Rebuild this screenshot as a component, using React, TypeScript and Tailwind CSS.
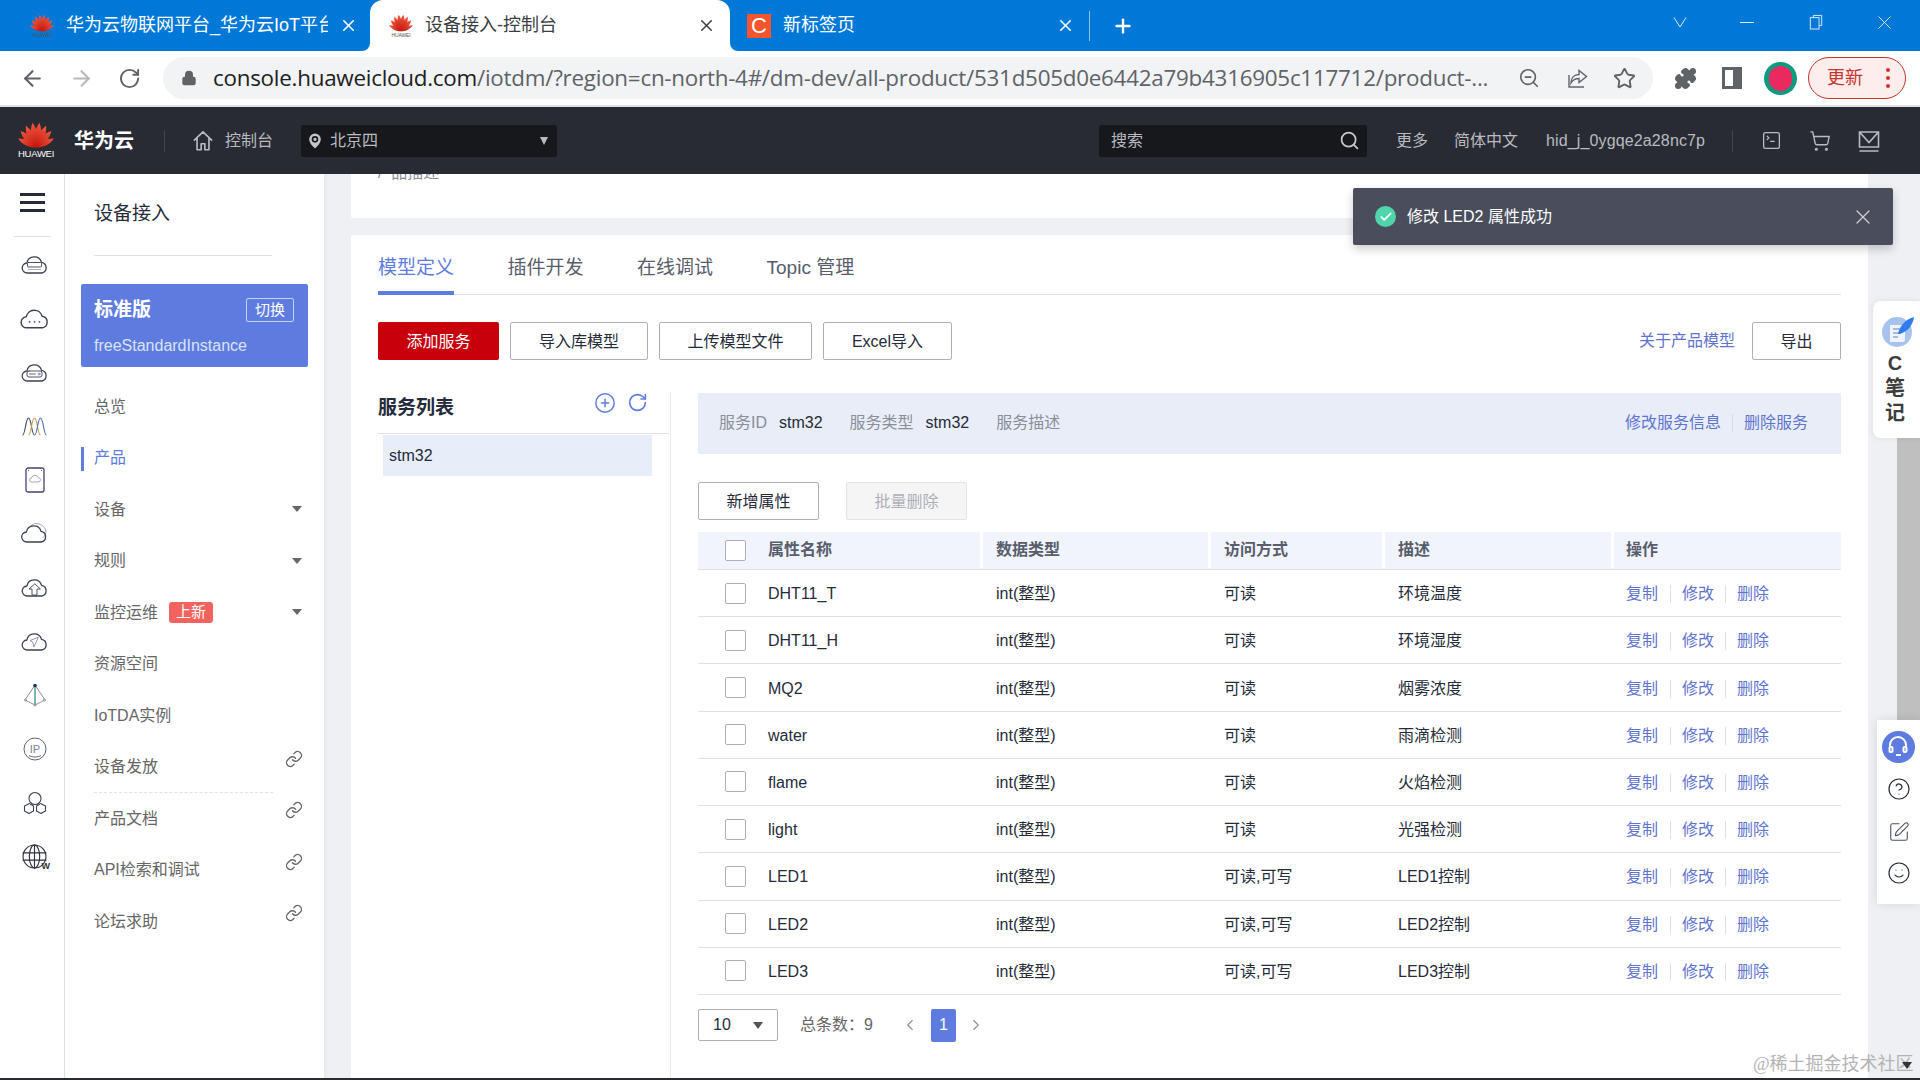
import React from 'react';
import {
  ArrowLeft,
  ArrowRight,
  RotateCw,
  Lock,
  ZoomOut,
  Star,
  Puzzle,
  MapPin,
  Search,
  X,
  Plus,
  Link,
  CirclePlus,
  ChevronLeft,
  ChevronRight,
  Check,
  CircleHelp,
  SquarePen,
  Smile,
  ShoppingCart,
  SquareTerminal,
} from 'lucide-react';

const FONT = 'font-["Liberation_Sans","Noto_Sans_CJK_SC",sans-serif]';

const CLOUD = 'M6 20a5 5 0 0 1-.6-10A7.5 7.5 0 0 1 20 9.4 5.4 5.4 0 0 1 20.4 20Z';

const rows = [
  { name: 'DHT11_T', access: '可读', desc: '环境温度' },
  { name: 'DHT11_H', access: '可读', desc: '环境湿度' },
  { name: 'MQ2', access: '可读', desc: '烟雾浓度' },
  { name: 'water', access: '可读', desc: '雨滴检测' },
  { name: 'flame', access: '可读', desc: '火焰检测' },
  { name: 'light', access: '可读', desc: '光强检测' },
  { name: 'LED1', access: '可读,可写', desc: 'LED1控制' },
  { name: 'LED2', access: '可读,可写', desc: 'LED2控制' },
  { name: 'LED3', access: '可读,可写', desc: 'LED3控制' },
];

const menu = [
  { label: '总览' },
  { label: '产品', active: true },
  { label: '设备', caret: true },
  { label: '规则', caret: true },
  { label: '监控运维', caret: true, badge: '上新' },
  { label: '资源空间' },
  { label: 'IoTDA实例' },
  { label: '设备发放', link: true, dashed: true },
  { label: '产品文档', link: true },
  { label: 'API检索和调试', link: true },
  { label: '论坛求助', link: true },
];

const HuaweiPetals: React.FC<{ className: string }> = ({ className }) => (
  <svg viewBox="0 0 36 26" className={className}>
    <defs>
      <linearGradient id="hw-petal" x1="0" y1="0" x2="0" y2="1">
        <stop offset="0" stopColor="#f2583e" />
        <stop offset="1" stopColor="#c3120d" />
      </linearGradient>
    </defs>
    {[
      { a: 8, l: 25, w: 4.2 },
      { a: 25, l: 24, w: 4.2 },
      { a: 43, l: 22.500, w: 4 },
      { a: 63, l: 20, w: 3.500 },
    ].map((p) =>
      [-1, 1].map((s) => (
        <path
          key={`${p.a}${s}`}
          transform={`translate(18 25.5) rotate(${s * p.a})`}
          d={`M0 0C${-p.w} ${-p.l * 0.35} ${-p.w} ${-p.l * 0.7} 0 ${-p.l}C${p.w} ${-p.l * 0.7} ${p.w} ${-p.l * 0.35} 0 0Z`}
          fill="url(#hw-petal)"
        />
      )),
    )}
  </svg>
);

const TabFavicon: React.FC = () => (
  <div className="flex flex-col items-center w-[24px] shrink-0">
    <HuaweiPetals className="w-[24px] h-[18px]" />
    <span className="text-[5px] leading-[6px] text-[#555] tracking-tight">HUAWEI</span>
  </div>
);

const RailIcon: React.FC<{ kind: number }> = ({ kind }) => {
  const stroke = '#3b4252';
  const common = { fill: 'none', stroke, strokeWidth: 1.3, strokeLinejoin: 'round' as const, strokeLinecap: 'round' as const };
  switch (kind) {
    case 0:
      return (
        <svg viewBox="0 0 26 22" className="w-[27px] h-[22px]" {...common}>
          <path d={CLOUD} />
          <rect x="6" y="9.500" width="14" height="4.500" rx="1" strokeWidth="0.9" />
          <path d="M7 16.500h12" strokeWidth="0.8" stroke="#8891a5" />
        </svg>
      );
    case 1:
      return (
        <svg viewBox="0 0 26 22" className="w-[29px] h-[24px]" {...common}>
          <path d={CLOUD} />
          <path d="M8.500 14.500h.1M13 14.500h.1M17.500 14.500h.1" strokeWidth="1.7" stroke="#4a5a80" />
        </svg>
      );
    case 2:
      return (
        <svg viewBox="0 0 26 22" className="w-[27px] h-[22px]" {...common}>
          <path d={CLOUD} />
          <rect x="5.500" y="10" width="15" height="6" rx="2" strokeWidth="0.9" />
          <path d="M8 13h6" strokeWidth="0.8" />
          <circle cx="17.500" cy="13" r="1" strokeWidth="0.8" stroke="#5e7ce0" />
        </svg>
      );
    case 3:
      return (
        <svg viewBox="0 0 26 20" className="w-[27px] h-[20px]" fill="none" strokeWidth="1.1">
          <path d="M1 19C4 19 4 2 7 2s3 17 6 17" stroke="#3b4252" />
          <path d="M7 19C10 19 10 2 13 2s3 17 6 17" stroke="#c49a50" />
          <path d="M13 19c3 0 3-17 6-17s3 17 6 17" stroke="#4a6fa8" />
        </svg>
      );
    case 4:
      return (
        <svg viewBox="0 0 20 26" className="w-[20px] h-[26px]" {...common}>
          <rect x="1" y="1" width="18" height="24" rx="2" stroke="#4b3c72" />
          <path d="M6.500 15a2 2 0 0 1 0-4 3.500 3.500 0 0 1 6.800-.2A2.100 2.100 0 0 1 13.500 15Z" strokeWidth="0.7" stroke="#7d8594" />
          <path d="M3.600 3.600h.1M16.400 3.600h.1" strokeWidth="1" />
        </svg>
      );
    case 5:
      return (
        <svg viewBox="0 0 27 22" className="w-[27px] h-[22px]" {...common}>
          <path d="M10 3.400A7 7 0 0 1 18 2c5 1 8 6 6.500 10-.4 1.600-1.500 3-2.700 3.600" stroke="#9aa1ad" strokeWidth="0.9" />
          <path d={CLOUD} />
        </svg>
      );
    case 6:
      return (
        <svg viewBox="0 0 26 22" className="w-[27px] h-[22px]" {...common}>
          <path d={CLOUD} />
          <path d="M13 8l-5.500 5h3v6h5v-6h3Z" strokeWidth="0.9" />
        </svg>
      );
    case 7:
      return (
        <svg viewBox="0 0 26 22" className="w-[27px] h-[22px]" {...common}>
          <path d={CLOUD} />
          <path d="M16.500 7.500 8.500 10.500l2.800 1.600 1 4.400Z" strokeWidth="0.7" stroke="#6b6390" />
        </svg>
      );
    case 8:
      return (
        <svg viewBox="0 0 24 24" className="w-[24px] h-[24px]" fill="none" strokeWidth="0.8" stroke="#6c7380">
          <path d="M12 2 2 17l10 5 10-5Z" />
          <path d="M12 2v20" stroke="#3d9b8b" strokeWidth="1.4" />
          <circle cx="12" cy="2.500" r="1.800" fill="#26304a" stroke="none" />
          <circle cx="2.500" cy="17" r="1" fill="#fff" />
          <circle cx="21.500" cy="17" r="1" fill="#fff" />
          <circle cx="12" cy="22" r="1" fill="#fff" />
        </svg>
      );
    case 9:
      return (
        <svg viewBox="0 0 24 24" className="w-[24px] h-[24px]" fill="none" stroke="#4b5160" strokeWidth="0.9">
          <circle cx="12" cy="12" r="11" />
          <path d="M6 18.500c3.500 2 8.500 2 12 0" />
          <text x="12" y="15.500" textAnchor="middle" fontSize="11" fill="#7a8190" stroke="none">IP</text>
        </svg>
      );
    case 10:
      return (
        <svg viewBox="0 0 24 24" className="w-[24px] h-[24px]" {...common} strokeWidth={1.1}>
          <circle cx="12" cy="7.500" r="6" />
          <path d="M6.500 12.500 1.500 15v5l4.500 2.500 4.500-2.500v-5l-3-1.800M17.500 12.500l5 2.500v5L18 22.500 13.500 20v-5l3-1.800" />
        </svg>
      );
    default:
      return (
        <div className="relative">
          <svg viewBox="0 0 24 24" className="w-[25px] h-[25px]" {...common} strokeWidth={1.1} stroke="#2d3340">
            <circle cx="12" cy="12" r="11" />
            <ellipse cx="12" cy="12" rx="5" ry="11" />
            <path d="M1 8.500h22M1 15.500h22M12 1v22" />
          </svg>
          <span className="absolute right-[-3px] bottom-[-2px] text-[9px] leading-none font-bold text-[#2d3340]">W</span>
        </div>
      );
  }
};

const OutlineButton: React.FC<{ label: string; className: string }> = ({ label, className }) => (
  <button className={`h-[38px] pt-[1px] bg-white border border-[#adb0b8] rounded-[2px] text-[16px] text-[#252b3a] flex items-center justify-center ${className}`}>
    {label}
  </button>
);

const TabStrip: React.FC = () => (
  <div className="h-[51px] bg-[#0078d7] flex items-stretch shrink-0 text-[18px] relative">
    <div className="w-[370px] pl-[30px] flex items-center gap-[12px] text-white">
      <TabFavicon />
      <span className="w-[262px] overflow-hidden whitespace-nowrap">华为云物联网平台_华为云IoT平台</span>
      <X size={19} strokeWidth={2} className="ml-[-1px] shrink-0" />
    </div>
    <div className="w-[360px] pl-[19px] bg-white rounded-t-[13px] flex items-center gap-[12px] text-[#3c4043] relative">
      <TabFavicon />
      <span className="w-[260px]">设备接入-控制台</span>
      <X size={19} strokeWidth={2} className="shrink-0 text-[#444]" />
      <div className="absolute left-[-8px] bottom-0 w-[8px] h-[8px] bg-white" />
      <div className="absolute left-[-8px] bottom-0 w-[8px] h-[8px] bg-[#0078d7] rounded-br-[8px]" />
      <div className="absolute right-[-8px] bottom-0 w-[8px] h-[8px] bg-white" />
      <div className="absolute right-[-8px] bottom-0 w-[8px] h-[8px] bg-[#0078d7] rounded-bl-[8px]" />
    </div>
    <div className="w-[359px] pl-[17px] flex items-center gap-[12px] text-white border-r border-transparent">
      <div className="w-[24px] h-[24px] bg-[#f4552c] flex items-center justify-center text-[22px] leading-none text-white shrink-0">C</div>
      <span className="w-[261px]">新标签页</span>
      <X size={19} strokeWidth={2} className="shrink-0" />
    </div>
    <div className="w-px h-[30px] bg-[#8fc2ec] self-center mt-[1px]" />
    <div className="flex items-center pl-[22px] text-white">
      <Plus size={22} strokeWidth={2.6} />
    </div>
    <div className="ml-auto flex items-center text-[#dbeaf8] h-[44px]">
      <svg viewBox="0 0 16 16" className="w-[16px] h-[16px] mr-[52px]" fill="none" stroke="currentColor" strokeWidth="1">
        <path d="M2 3.500 8 13l6-9.500" />
      </svg>
      <div className="w-[14px] h-px bg-current mr-[55px]" />
      <svg viewBox="0 0 16 18" className="w-[14px] h-[18px] mr-[50px]" fill="none" stroke="currentColor" strokeWidth="1.1">
        <rect x="1.500" y="4" width="10" height="13" />
        <path d="M5 4V1.500h9.500V13H11.500" />
      </svg>
      <X size={23} strokeWidth={1} className="mr-[24px]" />
    </div>
  </div>
);

const AddressBar: React.FC = () => (
  <div className="h-[56px] bg-white border-b-2 border-[#dfe1e5] flex items-center shrink-0">
    <ArrowLeft size={25} strokeWidth={2} className="ml-[20px] text-[#5f6368]" />
    <ArrowRight size={25} strokeWidth={2} className="ml-[24px] text-[#b6b9bd]" />
    <RotateCw size={23} strokeWidth={2} className="ml-[24px] text-[#5f6368]" />
    <div className="ml-[22px] w-[1490px] h-[42px] rounded-full bg-[#f1f3f4] flex items-center relative">
      <Lock size={16} fill="#5f6368" className="ml-[18px] text-[#5f6368] shrink-0" />
      <span className='ml-[16px] text-[22.4px] leading-none whitespace-nowrap font-["Open_Sans","Liberation_Sans",sans-serif] tracking-[-0.25px] text-[#5f6368]'>
        <span className="text-[#202124]">console.huaweicloud.com</span>/iotdm/?region=cn-north-4#/dm-dev/all-product/531d505d0e6442a79b4316905c117712/product-...
      </span>
      <ZoomOut size={22} strokeWidth={1.8} className="absolute left-[1355px] text-[#5f6368]" />
      <svg viewBox="0 0 24 24" className="absolute left-[1403px] w-[24px] h-[24px]" fill="none" stroke="#5f6368" strokeWidth="1.4">
        <path d="M13 4.500v4C8 8.500 5 12 5 17c2-3.500 4.500-4.500 8-4.500v4l7.500-6Z" />
        <path d="M3 9v12h15" />
      </svg>
      <Star size={23} strokeWidth={2} className="absolute left-[1450px] text-[#5f6368]" />
    </div>
    <Puzzle size={23} fill="#5f6368" className="ml-[21px] text-[#5f6368]" />
    <div className="ml-[25px] w-[20px] h-[22px] border-[3px] border-[#5f6368] border-r-[9px]" />
    <div className="ml-[22px] w-[33px] h-[33px] rounded-full bg-[#0f9a7f] flex items-center justify-center">
      <div className="w-[23px] h-[25px] rounded-full bg-[#ea2a5e]" />
    </div>
    <div className="ml-[11px] w-[98px] h-[42px] rounded-full bg-[#fdeeed] border border-[#c5352d] flex items-center pl-[18px] text-[#c5352d] text-[18px]">
      更新
      <span className="ml-[23px] flex flex-col gap-[4px]">
        <span className="w-[4px] h-[4px] rounded-full bg-[#d93025]" />
        <span className="w-[4px] h-[4px] rounded-full bg-[#d93025]" />
        <span className="w-[4px] h-[4px] rounded-full bg-[#d93025]" />
      </span>
    </div>
  </div>
);

const TopNav: React.FC = () => (
  <div className="h-[67px] bg-[#282b33] flex items-center shrink-0 text-[16px] text-[#b9bbc0]">
    <div className="ml-[18px] w-[36px] flex flex-col items-center">
      <HuaweiPetals className="w-[36px] h-[26px]" />
      <span className="text-[9.500px] leading-[12px] text-white tracking-tight">HUAWEI</span>
    </div>
    <span className="ml-[20px] text-[20px] font-bold text-white whitespace-nowrap">华为云</span>
    <div className="ml-[30px] w-px h-[22px] bg-[#44474f]" />
    <svg viewBox="0 0 24 24" className="ml-[27px] w-[22px] h-[24px]" fill="none" stroke="#b9bbc0" strokeWidth="1.8" strokeLinejoin="round">
      <path d="M2 11.500 12 2l10 9.500M5.500 9v12.500H10V15h4v6.500h4.500V9" />
    </svg>
    <span className="ml-[11px]">控制台</span>
    <div className="ml-[28px] w-[256px] h-[32px] bg-[#17181c] rounded-[2px] flex items-center pl-[4px] text-[#b9bbc0]">
      <MapPin size={20} fill="#c4c6ca" stroke="#17181c" strokeWidth={2} className="shrink-0" />
      <span className="ml-[5px]">北京四</span>
      <span className="ml-auto mr-[9px] w-0 h-0 border-x-[4.500px] border-x-transparent border-t-[8px] border-t-[#b9bbc0]" />
    </div>
    <div className="ml-[542px] w-[268px] h-[32px] bg-[#17181c] rounded-[2px] flex items-center pl-[12px] pr-[7px]">
      <span>搜索</span>
      <Search size={21} strokeWidth={2} className="ml-auto text-[#c6c8cc]" />
    </div>
    <span className="ml-[29px]">更多</span>
    <span className="ml-[26px]">简体中文</span>
    <span className="ml-[28px] whitespace-nowrap tracking-[0.13px]">hid_j_0ygqe2a28nc7p</span>
    <div className="ml-[27px] w-px h-[22px] bg-[#44474f]" />
    <SquareTerminal size={21} strokeWidth={1.5} className="ml-[28px]" />
    <ShoppingCart size={22} strokeWidth={1.5} className="ml-[27px]" />
    <svg viewBox="0 0 22 22" className="ml-[27px] w-[22px] h-[22px]" fill="none" stroke="#b9bbc0" strokeWidth="1.6">
      <path d="M1.500 2h19v15h-19ZM2 2.500l9 10 9-10M1.500 21h19" />
    </svg>
  </div>
);

const Sidebar: React.FC = () => (
  <>
    <div className="w-[65px] shrink-0 border-r border-[#dcdfe6] bg-white flex flex-col items-center">
      <div className="w-[37px] h-[63px] border-b border-[#dfe1e6] flex flex-col items-center pt-[19px] gap-[5.500px]">
        <span className="w-[25px] h-[2.500px] bg-[#252b3a]" />
        <span className="w-[25px] h-[2.500px] bg-[#252b3a]" />
        <span className="w-[25px] h-[2.500px] bg-[#252b3a]" />
      </div>
      {Array.from({ length: 12 }).map((_, i) => (
        <div key={i} className="w-full pl-[5px] h-[53.900px] flex items-center justify-center shrink-0">
          <RailIcon kind={i} />
        </div>
      ))}
    </div>
    <div className="w-[259px] shrink-0 bg-white px-[16px] text-[16px] text-[#666]">
      <div className="ml-[13px] h-[82px] w-[178px] border-b border-[#dfe1e6] flex items-start pt-[28px]">
        <span className="text-[19px] leading-[24px] text-[#252b3a]">设备接入</span>
      </div>
      <div className="mt-[28px] h-[83px] bg-[#5e7ce0] rounded-[2px] pl-[13px] pr-[14px] pt-[14px]">
        <div className="flex items-center h-[24px]">
          <span className="text-[19px] font-bold text-white pt-[1px]">标准版</span>
          <span className="ml-auto w-[48px] h-[24px] border border-[#c7d2f4] rounded-[2px] text-[15px] text-white flex items-center justify-center">切换</span>
        </div>
        <div className="mt-[12px] text-[16px] leading-[24px] text-[#dbe2f8]">freeStandardInstance</div>
      </div>
      <div className="mt-[14px]">
        {menu.map((m) => (
          <div
            key={m.label}
            className={`h-[51.500px] flex items-center pl-[13px] relative ${m.active ? 'text-[#5e7ce0]' : ''}`}
          >
            {m.active && <span className="absolute left-0 top-[14px] w-[3px] h-[24px] bg-[#5e7ce0]" />}
            <span className="whitespace-nowrap">{m.label}</span>
            {m.badge && (
              <span className="ml-[11px] w-[44px] h-[21px] mb-[1px] rounded-[3px] bg-[#f2635f] text-white text-[15px] flex items-center justify-center">
                {m.badge}
              </span>
            )}
            {m.caret && (
              <span className="ml-auto mr-[6px] mb-[1px] w-0 h-0 border-x-[5px] border-x-transparent border-t-[6px] border-t-[#666]" />
            )}
            {m.link && <Link size={18} strokeWidth={1.8} className="ml-auto mt-[-17px] mr-[5px] text-[#666]" />}
            {m.dashed && <span className="absolute left-[13px] bottom-0 w-[179px] border-b border-dashed border-[#dfe1e6]" />}
          </div>
        ))}
      </div>
    </div>
  </>
);

const AttributeTable: React.FC = () => (
  <div className="mt-[12px] text-[16px] text-[#252b3a]">
    <div className="grid grid-cols-[285px_228px_174px_229px_226px] h-[38px] pb-[1px] bg-[#f1f4fc] border-b border-[#dfe1e6] text-[#575d6c] font-bold">
      <div className="flex items-center border-r-[3px] border-white">
        <span className="ml-[27px] w-[21px] h-[21px] bg-white border border-[#adb0b8] rounded-[2px]" />
        <span className="ml-[22px]">属性名称</span>
      </div>
      <div className="flex items-center pl-[13px] border-r-[3px] border-white">数据类型</div>
      <div className="flex items-center pl-[13px] border-r-[3px] border-white">访问方式</div>
      <div className="flex items-center pl-[13px] border-r-[3px] border-white">描述</div>
      <div className="flex items-center pl-[12px]">操作</div>
    </div>
    {rows.map((r) => (
      <div key={r.name} className="grid grid-cols-[285px_228px_174px_229px_226px] h-[47.220px] border-b border-[#dfe1e6]">
        <div className="flex items-center">
          <span className="ml-[27px] w-[21px] h-[21px] bg-white border border-[#adb0b8] rounded-[2px]" />
          <span className="ml-[22px] mt-[2px]">{r.name}</span>
        </div>
        <div className="flex items-center pl-[13px] pt-[2px]">int(整型)</div>
        <div className="flex items-center pl-[13px] pt-[2px]">{r.access}</div>
        <div className="flex items-center pl-[13px] pt-[2px]">{r.desc}</div>
        <div className="flex items-center pl-[12px] pt-[2px] text-[#5f74cf]">
          <span>复制</span>
          <span className="mx-[11.500px] w-px h-[18px] bg-[#dfe1e6]" />
          <span>修改</span>
          <span className="mx-[11px] w-px h-[18px] bg-[#dfe1e6]" />
          <span>删除</span>
        </div>
      </div>
    ))}
  </div>
);

const Pagination: React.FC = () => (
  <div className="mt-[14px] flex items-center text-[16px] text-[#666]">
    <div className="w-[80px] h-[32px] border border-[#adb0b8] rounded-[2px] flex items-center pl-[14px] text-[#252b3a]">
      10
      <span className="ml-[22px] w-0 h-0 border-x-[5px] border-x-transparent border-t-[7px] border-t-[#555]" />
    </div>
    <span className="ml-[22px] whitespace-nowrap">总条数：9</span>
    <ChevronLeft size={18} strokeWidth={1.5} className="ml-[28px] text-[#8a8e99]" />
    <div className="ml-[12px] w-[25px] h-[33px] bg-[#5e7ce0] rounded-[2px] text-white flex items-center justify-center">1</div>
    <ChevronRight size={18} strokeWidth={1.5} className="ml-[11px] text-[#8a8e99]" />
  </div>
);

const ModelPanel: React.FC = () => (
  <div className="flex-1 mt-[17px] bg-white rounded-t-[2px] pl-[27px] pr-[27px] flex flex-col min-h-0">
    <div className="h-[60px] border-b border-[#dfe1e6] flex gap-[53.500px] text-[19px] text-[#575d6c] shrink-0">
      <div className="h-[60px] pt-[21px] leading-[24px] border-b-[4px] border-[#5e7ce0] text-[#5e7ce0]">模型定义</div>
      <div className="pt-[21px] leading-[24px]">插件开发</div>
      <div className="pt-[21px] leading-[24px]">在线调试</div>
      <div className="pt-[21px] leading-[24px]">Topic 管理</div>
    </div>
    <div className="mt-[27px] flex items-center shrink-0">
      <button className="w-[121px] h-[38px] pt-[1px] bg-[#c7000b] rounded-[2px] text-white text-[16px]">添加服务</button>
      <OutlineButton label="导入库模型" className="ml-[11px] w-[138px]" />
      <OutlineButton label="上传模型文件" className="ml-[11px] w-[153px]" />
      <OutlineButton label="Excel导入" className="ml-[11px] w-[129px]" />
      <span className="ml-auto text-[16px] text-[#5f74cf]">关于产品模型</span>
      <OutlineButton label="导出" className="ml-[17px] w-[89px]" />
    </div>
    <div className="mt-[32px] flex flex-1 min-h-0">
      <div className="w-[293px] border-r border-[#e8eaee] shrink-0">
        <div className="h-[42px] mr-[1px] border-b border-[#dfe1e6] flex items-center">
          <span className="text-[19px] font-bold text-[#252b3a] mb-[8px]">服务列表</span>
          <CirclePlus size={22} strokeWidth={1.6} className="ml-auto mb-[20px] text-[#5e7ce0]" />
          <RotateCw size={21} strokeWidth={1.8} className="ml-[11px] mr-[21px] mb-[20px] text-[#5e7ce0]" />
        </div>
        <div className="mt-[1px] ml-[5px] w-[269px] h-[41px] bg-[#e8edfa] flex items-center pl-[6px] text-[16px] text-[#252b3a]">stm32</div>
      </div>
      <div className="flex-1 pl-[27px] min-w-0">
        <div className="mt-[1px] h-[61px] pb-[2px] bg-[#e8edf8] flex items-center text-[16px] pl-[21px] pr-[33px]">
          <span className="text-[#8a8e99]">服务ID</span>
          <span className="ml-[12px] text-[#252b3a]">stm32</span>
          <span className="ml-[27px] text-[#8a8e99]">服务类型</span>
          <span className="ml-[12px] text-[#252b3a]">stm32</span>
          <span className="ml-[27px] text-[#8a8e99]">服务描述</span>
          <span className="ml-auto text-[#5f74cf]">修改服务信息</span>
          <span className="mx-[11px] w-px h-[18px] bg-[#d5d9e4]" />
          <span className="text-[#5f74cf]">删除服务</span>
        </div>
        <div className="mt-[28px] flex items-center">
          <OutlineButton label="新增属性" className="w-[121px]" />
          <button className="ml-[27px] w-[121px] h-[38px] pt-[1px] bg-[#f5f5f6] border border-[#e3e4e7] rounded-[2px] text-[16px] text-[#adb0b8]">批量删除</button>
        </div>
        <AttributeTable />
        <Pagination />
      </div>
    </div>
  </div>
);

export default function App() {
  return (
    <div className={`relative w-[1920px] h-[1080px] overflow-hidden flex flex-col bg-white ${FONT}`}>
      <TabStrip />
      <AddressBar />
      <TopNav />
      <div className="flex flex-1 min-h-0">
        <Sidebar />
        <div className="flex-1 bg-[#eff0f3] flex min-w-0 shadow-[inset_4px_0_4px_-3px_#e2e4e8]">
          <div className="ml-[27px] w-[1517px] flex flex-col min-h-0">
            <div className="h-[44px] bg-white rounded-b-[2px] overflow-hidden shrink-0 pl-[27px]">
              <div className="mt-[-11px] text-[16px] leading-[20px] text-[#8a8e99] whitespace-pre">/  品描述</div>
            </div>
            <ModelPanel />
          </div>
          <div className="flex-1 flex justify-end">
            <div className="w-[23px] h-[300px] mt-[250px] bg-[#bfbfbf]" />
          </div>
        </div>
      </div>
      <div className="h-[2px] bg-[#2a2c33] shrink-0" />

      {/* toast */}
      <div className="absolute left-[1353px] top-[188px] w-[540px] h-[57px] bg-[#4a4e5c] rounded-[2px] shadow-[0_4px_10px_rgba(0,0,0,0.2)] flex items-center pl-[22px] pr-[18px] text-white text-[16px]">
        <span className="w-[21px] h-[21px] rounded-full bg-[#50d4ab] flex items-center justify-center">
          <Check size={14} strokeWidth={3} className="text-white" />
        </span>
        <span className="ml-[11px]">修改 LED2 属性成功</span>
        <X size={24} strokeWidth={1.2} className="ml-auto text-[#cfd1d6]" />
      </div>

      {/* C note panel */}
      <div className="absolute left-[1873px] top-[301px] w-[47px] h-[137px] bg-white rounded-l-[8px] shadow-[0_0_6px_rgba(0,0,0,0.08)] flex flex-col items-center pt-[15px]">
        <svg viewBox="0 0 32 32" className="w-[32px] h-[32px] ml-[3px]">
          <circle cx="15" cy="16" r="15" fill="#a8c2ef" />
          <path d="M8 9h15v15a2 2 0 0 1-2 2H8Z" fill="#eef3fc" />
          <path d="M11 13h7M11 17h7M11 21h5" stroke="#8fa8d8" strokeWidth="1.500" />
          <path d="M16 18C18 9 24 3 32 1c-1 8-6 14-14 17Z" fill="#2f7bf0" />
        </svg>
        <div className="mt-[3px] text-[20px] leading-[25px] font-bold text-[#3d3d3d] flex flex-col items-center pr-[3px]">
          <span>C</span>
          <span>笔</span>
          <span>记</span>
        </div>
      </div>

      {/* help panel */}
      <div className="absolute left-[1877px] top-[720px] w-[43px] h-[184px] bg-white shadow-[0_0_10px_rgba(0,0,0,0.1)] flex flex-col items-center">
        <div className="mt-[11px] ml-[-1px] w-[33px] h-[32px] rounded-full bg-[#5e7ce0] flex items-center justify-center">
          <svg viewBox="0 0 24 24" className="w-[24px] h-[24px]" fill="none" stroke="#fff" strokeWidth="2">
            <path d="M4 13V10a8 8 0 0 1 16 0v3M10 20h5" />
            <rect x="3.500" y="12" width="3" height="5" rx="1" />
            <rect x="17.500" y="12" width="3" height="5" rx="1" />
          </svg>
        </div>
        <CircleHelp size={24} strokeWidth={1.2} className="mt-[14px] text-[#252b3a]" />
        <SquarePen size={22} strokeWidth={1.2} className="mt-[20px] text-[#4b5160]" />
        <Smile size={24} strokeWidth={1.2} className="mt-[18px] text-[#252b3a]" />
      </div>

      {/* watermark */}
      <span className='absolute left-[1753px] top-[1052px] text-[18px] leading-[24px] whitespace-nowrap text-[#b3b3b3] font-["Liberation_Serif","Noto_Sans_CJK_SC",serif]'>@稀土掘金技术社区</span>
      <span className="absolute left-[1902px] top-[1062px] w-0 h-0 border-x-[5.500px] border-x-transparent border-t-[7px] border-t-[#333]" />
    </div>
  );
}
